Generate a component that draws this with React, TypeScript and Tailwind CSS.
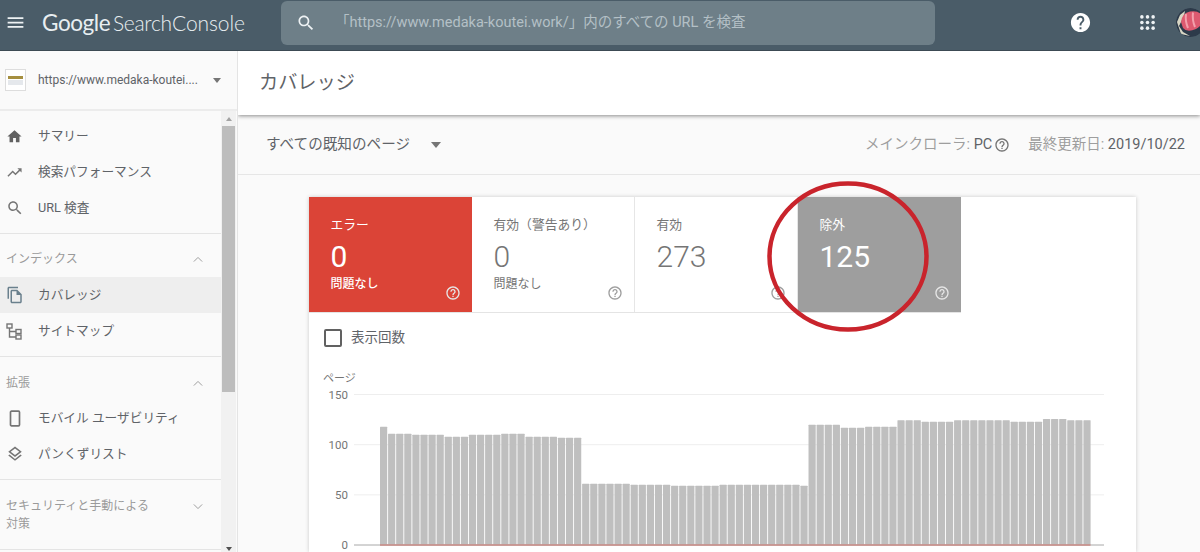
import React from "react";

const P = {
  menu: "M3 18h18v-2H3v2zm0-5h18v-2H3v2zm0-7v2h18V6H3z",
  search: "M15.5 14h-.79l-.28-.27C15.41 12.59 16 11.11 16 9.5 16 5.91 13.09 3 9.5 3S3 5.91 3 9.5 5.91 16 9.5 16c1.61 0 3.09-.59 4.23-1.57l.27.28v.79l5 4.99L20.49 19l-4.99-5zm-6 0C7.01 14 5 11.99 5 9.5S7.01 5 9.5 5 14 7.01 14 9.5 11.99 14 9.5 14z",
  home: "M10 20v-6h4v6h5v-8h3L12 3 2 12h3v8z",
  trend: "M16 6l2.29 2.29-4.88 4.88-4-4L2 16.59 3.41 18l6-6 4 4 6.3-6.29L22 12V6z",
  copy: "M16 1H4c-1.1 0-2 .9-2 2v14h2V3h12V1zm-1 4H8c-1.1 0-1.99.9-1.99 2L6 21c0 1.1.89 2 1.99 2H19c1.1 0 2-.9 2-2V11l-6-6zM8 21V7h6v5h5v9H8z",
  layers: "M11.99 18.54l-7.37-5.73L3 14.07l9 7 9-7-1.63-1.27-7.38 5.74zM12 16l7.36-5.73L21 9l-9-7-9 7 1.63 1.27L12 16zm0-11.47L17.74 9 12 13.47 6.26 9 12 4.53z",
  help: "M11 18h2v-2h-2v2zm1-16C6.48 2 2 6.48 2 12s4.48 10 10 10 10-4.48 10-10S17.52 2 12 2zm0 18c-4.41 0-8-3.59-8-8s3.59-8 8-8 8 3.59 8 8-3.59 8-8 8zm0-14c-2.21 0-4 1.79-4 4h2c0-1.1.9-2 2-2s2 .9 2 2c0 2-3 1.75-3 5h2c0-2.25 3-2.5 3-5 0-2.21-1.79-4-4-4z",
  helpFill: "M12 2C6.48 2 2 6.48 2 12s4.48 10 10 10 10-4.48 10-10S17.52 2 12 2zm1 17h-2v-2h2v2zm2.07-7.75l-.9.92C13.45 12.9 13 13.5 13 15h-2v-.5c0-1.1.45-2.1 1.17-2.83l1.24-1.26c.37-.36.59-.86.59-1.41 0-1.1-.9-2-2-2s-2 .9-2 2H8c0-2.21 1.79-4 4-4s4 1.79 4 4c0 .88-.36 1.68-.93 2.25z",
};

function I({ d, className }: { d: string; className: string }) {
  return (
    <svg viewBox="0 0 24 24" fill="currentColor" className={className}>
      <path d={d} />
    </svg>
  );
}

function Chevron({ up }: { up: boolean }) {
  return (
    <svg viewBox="0 0 12 8" className="w-[10px] h-[7px] text-[#9e9e9e]" fill="none" stroke="currentColor" strokeWidth="1.2">
      <path d={up ? "M1 6.5 L6 1.5 L11 6.5" : "M1 1.5 L6 6.5 L11 1.5"} />
    </svg>
  );
}

function Sitemap() {
  return (
    <svg viewBox="0 0 16 17" className="w-[16px] h-[17px] text-[#757575]" fill="none" stroke="currentColor" strokeWidth="1.4">
      <rect x="1" y="1" width="5" height="4" />
      <rect x="10" y="6.5" width="5" height="4" />
      <rect x="10" y="12" width="5" height="4" />
      <path d="M3.5 5 V14 H10 M3.5 8.5 H10" />
    </svg>
  );
}

function Phone() {
  return (
    <svg viewBox="0 0 12 17" className="w-[12px] h-[17px] text-[#757575]" fill="none" stroke="currentColor" strokeWidth="1.7">
      <rect x="1.5" y="1.2" width="9" height="14.6" rx="1" />
    </svg>
  );
}

function NavRow({ icon, label, active }: { icon: React.ReactNode; label: string; active?: boolean }) {
  return (
    <div className={`flex items-center h-[36px] ${active ? "bg-[#eeeeee]" : ""}`}>
      <div className="w-[38px] pl-[6px] flex items-center shrink-0">{icon}</div>
      <span className="text-[12.7px] text-[#5f6368] whitespace-nowrap">{label}</span>
    </div>
  );
}

function SectionHead({ children, up }: { children: React.ReactNode; up: boolean }) {
  return (
    <div className="flex justify-between pl-[6px] pr-[18px]">
      <span className="text-[12px] leading-[18px] text-[#9a9a9a]">{children}</span>
      <span className="pt-[6px]"><Chevron up={up} /></span>
    </div>
  );
}

function Tile({ label, value, sub, tone }: { label: string; value: string; sub?: string; tone: "red" | "gray" | "white" }) {
  const bg = tone === "red" ? "bg-[#db4437] text-white" : tone === "gray" ? "bg-[#9e9e9e] text-white" : "bg-white text-[#757575] border-r border-[#e6e6e6]";
  const helpColor = tone === "white" ? "text-[#9e9e9e]" : "text-[#e6e6e6]";
  return (
    <div className={`relative w-[163px] h-[115px] pl-[21.5px] pt-[19px] ${bg}`}>
      <div className="text-[12.8px] leading-[18px]">{label}</div>
      <div className={`text-[30px] leading-[34px] mt-[6px] ${tone === "white" ? "font-light" : "font-normal"}`}>{value}</div>
      {sub && <div className={`text-[12px] leading-[16px] mt-[2px] ${tone === "red" ? "font-medium" : ""}`}>{sub}</div>}
      <div className={`absolute right-[11px] bottom-[11px] ${helpColor}`}>
        <I d={P.help} className="w-[16px] h-[16px]" />
      </div>
    </div>
  );
}

const low = [61, 61, 61, 61, 61, 61, 60, 60, 60, 60, 60, 59, 59, 59, 59, 59, 59, 60, 60, 60, 60, 60, 60, 60, 60, 60, 60, 59];
const heights = [
  118, 111, 111, 111, 110, 110, 110, 110, 108, 108, 108, 110, 110, 110, 110, 111, 111, 111, 108, 108, 108, 108, 107, 107, 107,
  ...low,
  120, 120, 120, 120, 117, 117, 117, 118, 118, 118, 118, 124.5, 124.5, 124.5, 123, 123, 123, 123, 124.5, 124.5, 124.5, 124.5, 124.5, 124.5, 124.5, 123, 123, 123, 123, 125.5, 125.5, 125.5, 124.5, 124.5, 124.5,
];

function Chart() {
  const x0 = 380 - 320;
  const y0 = 545 - 366;
  const pitch = (1091.5 - 380) / heights.length;
  return (
    <svg viewBox="0 0 800 186" className="block w-[800px] h-[186px]">
      <text x="3" y="16" fontSize="11" fill="#757575" fontFamily="'Noto Sans CJK JP', sans-serif">ページ</text>
      {[150, 100, 50].map((v) => (
        <g key={v}>
          <line x1="34" x2="784" y1={y0 - v * 1.003} y2={y0 - v * 1.003} stroke="#eeeeee" />
          <text x="28" y={y0 - v * 1.003 + 4} textAnchor="end" fontSize="11.5" fill="#757575" fontFamily="Roboto, sans-serif">{v}</text>
        </g>
      ))}
      <text x="28" y={y0 + 4} textAnchor="end" fontSize="11.5" fill="#757575" fontFamily="Roboto, sans-serif">0</text>
      <line x1="34" x2="784" y1={y0} y2={y0} stroke="#a8a8a8" />
      {heights.map((h, i) => (
        <rect key={i} x={x0 + i * pitch} y={y0 - h * 1.003} width={pitch - 0.9} height={h * 1.003} fill="#bfbfbf" rx="0.5" />
      ))}
      <line x1={x0} x2={x0 + heights.length * pitch - 1} y1={y0} y2={y0} stroke="#c98a84" strokeWidth="1.6" />
    </svg>
  );
}

export default function App() {
  return (
    <div className="w-[1200px] h-[552px] overflow-hidden relative flex flex-col bg-[#fafafa] font-['Roboto','Noto_Sans_CJK_JP',sans-serif]">
      {/* Top bar */}
      <header className="h-[51px] shrink-0 bg-[#4a5c68] border-b border-[#3c4a53] pb-[5px] flex items-center text-white">
        <div className="w-[42px] pl-[5px] shrink-0">
          <I d={P.menu} className="w-[21px] h-[21px] text-[#eef2f4]" />
        </div>
        <div className="w-[239px] shrink-0 text-[#e8eef1] whitespace-nowrap font-['Lato',sans-serif] flex items-baseline">
          <span className="text-[22.5px] font-normal tracking-[-0.4px] w-[71px]">Google</span>
          <span className="text-[21px] font-light tracking-[-0.3px] w-[59px]">Search</span>
          <span className="text-[21px] font-light tracking-[-0.1px]">Console</span>
        </div>
        <div className="w-[654px] h-[44px] shrink-0 rounded-[6px] bg-[#6e7f88] flex items-center">
          <div className="w-[54px] pl-[15px] shrink-0">
            <I d={P.search} className="w-[20px] h-[20px] text-[#eef2f4]" />
          </div>
          <span className="text-[14.5px] text-[#b4c0c6] whitespace-nowrap">「https://www.medaka-koutei.work/」内のすべての URL を検査</span>
        </div>
        <div className="ml-[134px] w-[22px] shrink-0">
          <I d={P.helpFill} className="w-[23px] h-[23px] text-white" />
        </div>
        <div className="ml-[49px] w-[15px] shrink-0">
          <svg viewBox="0 0 16 16" className="w-[15px] h-[15px]" fill="#eef2f4">
            {[2, 8, 14].flatMap((y) => [2, 8, 14].map((x) => <circle key={`${x}-${y}`} cx={x} cy={y} r="1.9" />))}
          </svg>
        </div>
        <div className="ml-[21px] w-[29px] h-[29px] shrink-0 rounded-full overflow-hidden">
          <svg viewBox="0 0 29 29" className="w-[29px] h-[29px]">
            <circle cx="14.5" cy="14.5" r="14.5" fill="#2d3a4a" />
            <path d="M1 14 L4 7 L9 3 L8 8 L3 18 L7 24 L14 28 L5 26 Z" fill="#d8d6c4" />
            <path d="M5 14 Q6 5 14 3.5 Q23 2 26 8 Q28 17 20 21 Q11 25 7 20 Z" fill="#dd5a70" />
            <path d="M10 6 Q9 13 12 20 M17 4.5 Q16 12 19 19" stroke="#f3a0ac" strokeWidth="2" fill="none" />
          </svg>
        </div>
      </header>

      <div className="flex flex-1 min-h-0">
        {/* Sidebar */}
        <aside className="w-[238px] shrink-0 border-r border-[#e4e4e4] flex flex-col">
          <div className="h-[60px] shrink-0 border-b-2 border-[#ececec] flex items-center">
            <div className="ml-[5px] w-[21px] h-[22px] border border-[#dddddd] bg-white flex flex-col justify-center items-center shrink-0">
              <div className="w-[15px] h-[3px] bg-[#a58f3f]" />
              <div className="w-[15px] h-[5px] mt-[1px] bg-[#e5e8ec]" />
            </div>
            <span className="ml-[12px] w-[160px] shrink-0 text-[12px] text-[#5f6368] whitespace-nowrap">https://www.medaka-koutei....</span>
            <div className="ml-[15px] w-0 h-0 border-l-[4.5px] border-r-[4.5px] border-t-[5px] border-l-transparent border-r-transparent border-t-[#757575]" />
          </div>
          <div className="flex flex-1 min-h-0">
            <nav className="w-[221px] shrink-0 flex flex-col overflow-hidden">
              <div className="pt-[7px] pb-[7px] border-b border-[#e4e4e4]">
                <NavRow icon={<I d={P.home} className="w-[17px] h-[17px] text-[#616161]" />} label="サマリー" />
                <NavRow icon={<I d={P.trend} className="w-[17px] h-[17px] text-[#757575]" />} label="検索パフォーマンス" />
                <NavRow icon={<I d={P.search} className="w-[18px] h-[18px] text-[#757575]" />} label="URL 検査" />
              </div>
              <div className="pt-[16px] pb-[7px] border-b border-[#e4e4e4]">
                <div className="mb-[9px]"><SectionHead up>インデックス</SectionHead></div>
                <NavRow active icon={<I d={P.copy} className="w-[18px] h-[18px] text-[#6a808d]" />} label="カバレッジ" />
                <NavRow icon={<Sitemap />} label="サイトマップ" />
              </div>
              <div className="pt-[17px] pb-[7px] border-b border-[#e4e4e4]">
                <div className="mb-[8px]"><SectionHead up>拡張</SectionHead></div>
                <NavRow icon={<span className="pl-[3px] flex"><Phone /></span>} label="モバイル ユーザビリティ" />
                <NavRow icon={<I d={P.layers} className="w-[18px] h-[18px] text-[#757575]" />} label="パンくずリスト" />
              </div>
              <div className="pt-[17px] pb-[16px] border-b border-[#e4e4e4]">
                <SectionHead up={false}>セキュリティと手動による<br />対策</SectionHead>
              </div>
            </nav>
            <div className="w-[15px] shrink-0 bg-[#f1f1f1] flex flex-col">
              <div className="h-[15px] shrink-0 flex items-center justify-center">
                <div className="w-0 h-0 border-l-[3.5px] border-r-[3.5px] border-b-[4px] border-l-transparent border-r-transparent border-b-[#a3a3a3]" />
              </div>
              <div className="h-[266px] shrink-0 mx-[1px] bg-[#bdbdbd]" />
              <div className="flex-1" />
              <div className="h-[7px] shrink-0 flex items-start justify-center pt-[2px]">
                <div className="w-0 h-0 border-l-[3.5px] border-r-[3.5px] border-t-[4px] border-l-transparent border-r-transparent border-t-[#505050]" />
              </div>
            </div>
          </div>
        </aside>

        {/* Main */}
        <main className="flex-1 min-w-0 flex flex-col overflow-hidden">
          <div className="h-[64px] shrink-0 bg-white shadow-[0_1px_4px_rgba(0,0,0,0.45)] pl-[21px] flex items-center relative">
            <h1 className="text-[19.2px] text-[#5f6368] font-normal">カバレッジ</h1>
          </div>
          <div className="h-[60px] shrink-0 border-b border-[#e6e6e6] flex items-center pl-[28px] pr-[15px]">
            <span className="text-[14.6px] text-[#5f6368] whitespace-nowrap">すべての既知のページ</span>
            <div className="ml-[21px] w-0 h-0 border-l-[5.5px] border-r-[5.5px] border-t-[6px] border-l-transparent border-r-transparent border-t-[#757575]" />
            <div className="ml-auto flex items-center text-[14.5px] whitespace-nowrap">
              <span className="text-[#9e9e9e]">メインクローラ:&nbsp;</span>
              <span className="text-[#5f6368]">PC</span>
              <I d={P.help} className="ml-[2px] w-[16px] h-[16px] text-[#757575]" />
              <span className="ml-[18px] text-[#9e9e9e]">最終更新日:&nbsp;</span>
              <span className="text-[#5f6368]">2019/10/22</span>
            </div>
          </div>
          <section className="mt-[22px] ml-[71px] w-[827px] shrink-0 bg-white shadow-[0_0_4px_rgba(0,0,0,0.2)]">
            <div className="flex w-[652px] border-b border-[#e4e4e4]">
              <Tile tone="red" label="エラー" value="0" sub="問題なし" />
              <Tile tone="white" label="有効（警告あり）" value="0" sub="問題なし" />
              <Tile tone="white" label="有効" value="273" />
              <Tile tone="gray" label="除外" value="125" />
            </div>
            <div className="flex items-center h-[49px] pl-[15px]">
              <div className="w-[18px] h-[18px] rounded-[2px] border-2 border-[#616161]" />
              <span className="ml-[9px] text-[13.5px] text-[#5f6368]">表示回数</span>
            </div>
            <div className="pt-[4px] pl-[11px]">
              <Chart />
            </div>
          </section>
        </main>
      </div>

      {/* Hand-drawn annotation circle lying over the page */}
      <svg viewBox="0 0 170 160" className="absolute left-[763px] top-[177px] w-[170px] h-[160px] pointer-events-none" fill="none">
        <ellipse cx="85" cy="79.5" rx="78.5" ry="73" stroke="#c9242c" strokeWidth="4.5" />
      </svg>
    </div>
  );
}
